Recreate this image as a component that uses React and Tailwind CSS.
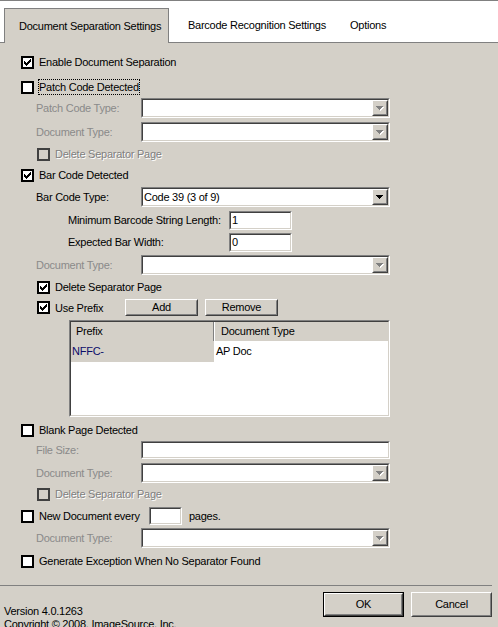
import React from "react";

const font = { fontFamily: '"Liberation Sans", Arial, sans-serif' };

function Sunken({ className = "", inner = "bg-white", children }) {
  return (
    <div className={`shrink-0 border border-t-[#808080] border-l-[#808080] border-r-white border-b-white ${className}`}>
      <div className={`h-full w-full border border-t-[#404040] border-l-[#404040] border-r-[#d4d0c8] border-b-[#d4d0c8] ${inner}`}>
        {children}
      </div>
    </div>
  );
}

function Raised({ className = "", children }) {
  return (
    <div className={`shrink-0 border border-t-white border-l-white border-r-[#404040] border-b-[#404040] bg-[#d4d0c8] ${className}`}>
      <div className="flex h-full w-full items-center justify-center border border-t-[#d4d0c8] border-l-[#d4d0c8] border-r-[#808080] border-b-[#808080]">
        {children}
      </div>
    </div>
  );
}

function Arrow({ disabled }) {
  const d = "M0 0h7v1H0z M1 1h5v1H1z M2 2h3v1H2z M3 3h1v1H3z";
  return (
    <svg width="8" height="5" viewBox="0 0 8 5" shapeRendering="crispEdges">
      {disabled && <path d={d} fill="#ffffff" transform="translate(1 1)" />}
      <path d={d} fill={disabled ? "#808080" : "#000000"} />
    </svg>
  );
}

function Combo({ value = "", disabled }) {
  return (
    <Sunken className="h-[20px] w-[249px]">
      <div className="flex h-full">
        <div className="flex-1 pl-[1px] leading-[16px] text-black">{value}</div>
        <Raised className="h-[16px] w-[16px]">
          <Arrow disabled={disabled} />
        </Raised>
      </div>
    </Sunken>
  );
}

function Field({ value = "", className }) {
  return (
    <Sunken className={className}>
      <div className="flex h-full items-center pl-[1px] text-black">{value}</div>
    </Sunken>
  );
}

function Check({ checked, disabled }) {
  return (
    <div
      className={`flex h-[13px] w-[13px] shrink-0 items-center justify-center border-2 ${
        disabled ? "border-[#404040] bg-[#d4d0c8]" : "border-black bg-white"
      }`}
    >
      {checked && (
        <svg width="9" height="9" viewBox="0 0 9 9" shapeRendering="crispEdges">
          <path
            d="M7 1h1v1H7z M6 2h2v1H6z M1 3h1v1H1z M5 3h3v1H5z M1 4h2v1H1z M4 4h3v1H4z M1 5h5v1H1z M2 6h3v1H2z M3 7h1v1H3z"
            fill={disabled ? "#808080" : "#000"}
          />
        </svg>
      )}
    </div>
  );
}

function CheckRow({ className, label, checked, disabled, focus }) {
  return (
    <div className={`flex h-[18px] items-center ${className}`}>
      <Check checked={checked} disabled={disabled} />
      <span
        className={`ml-[4px] whitespace-nowrap border leading-[14px] ${
          focus ? "border-dotted border-black" : "border-transparent"
        } ${disabled ? "text-[#808080] [text-shadow:1px_1px_0_#ffffff]" : "text-black"}`}
      >
        {label}
      </span>
    </div>
  );
}

function ComboRow({ className, label, value, disabled }) {
  return (
    <div className={`flex h-[20px] items-center ${className}`}>
      <span className={`ml-[36px] w-[105px] shrink-0 whitespace-nowrap ${disabled ? "text-[#8a8a8a]" : "text-black"}`}>
        {label}
      </span>
      <Combo value={value} disabled={disabled} />
    </div>
  );
}

function FieldRow({ className, label, value }) {
  return (
    <div className={`flex h-[19px] items-center ${className}`}>
      <span className="ml-[68px] w-[161px] shrink-0 whitespace-nowrap">{label}</span>
      <Field className="h-[19px] w-[63px]" value={value} />
    </div>
  );
}

function Button({ children, className, isDefault }) {
  if (isDefault) {
    return (
      <div className={`shrink-0 border border-black ${className}`}>
        <Raised className="h-full w-full">{children}</Raised>
      </div>
    );
  }
  return <Raised className={className}>{children}</Raised>;
}

export default function App() {
  return (
    <div
      className="h-[627px] w-[498px] overflow-hidden bg-[#d4d0c8] text-[11px] tracking-[-0.25px] text-black"
      style={font}
    >
      {/* tab strip */}
      <div className="flex h-[43px] items-end border-t border-b border-[#808080] bg-white">
        <div className="-mb-px ml-[4px] flex h-[35px] w-[165px] items-center whitespace-nowrap border-l border-t border-r border-[#808080] bg-[#d4d0c8] pl-[14px]">
          Document Separation Settings
        </div>
        <div className="flex h-[34px] items-center whitespace-nowrap">
          <span className="ml-[19px] w-[162px]">Barcode Recognition Settings</span>
          <span>Options</span>
        </div>
      </div>

      <div className="flex flex-col">
        <div className="ml-[21px]">
          <CheckRow className="mt-[10px]" label="Enable Document Separation" checked />
          <CheckRow className="mt-[7px]" label="Patch Code Detected" focus />
        </div>
        <ComboRow className="mt-[2px]" label="Patch Code Type:" disabled />
        <ComboRow className="mt-[4px]" label="Document Type:" disabled />
        <div className="ml-[37px]">
          <CheckRow className="mt-[3px]" label="Delete Separator Page" disabled />
        </div>
        <div className="ml-[21px]">
          <CheckRow className="mt-[3px]" label="Bar Code Detected" checked />
        </div>
        <ComboRow className="mt-[3px]" label="Bar Code Type:" value="Code 39 (3 of 9)" />
        <FieldRow className="mt-[4px]" label="Minimum Barcode String Length:" value="1" />
        <FieldRow className="mt-[3px]" label="Expected Bar Width:" value="0" />
        <ComboRow className="mt-[3px]" label="Document Type:" disabled />
        <div className="ml-[37px]">
          <CheckRow className="mt-[3px]" label="Delete Separator Page" checked />
        </div>
        <div className="mt-[3px] flex h-[17px] items-center">
          <div className="ml-[37px] w-[88px] shrink-0">
            <CheckRow className="" label="Use Prefix" checked />
          </div>
          <Button className="h-[17px] w-[73px]">Add</Button>
          <Button className="ml-[7px] h-[17px] w-[73px]">Remove</Button>
        </div>

        {/* prefix grid */}
        <Sunken className="ml-[69px] mt-[4px] h-[97px] w-[321px]">
          <div className="flex h-[19px] bg-[#d4d0c8]">
            <div className="flex w-[143px] items-center border-r border-[#808080] pl-[5px]">Prefix</div>
            <div className="flex flex-1 items-center border-l border-white pl-[6px]">Document Type</div>
          </div>
          <div className="flex h-[21px]">
            <div className="flex w-[143px] items-center bg-[#d4d0c8] pl-[1px] text-[#0c0c6a]">NFFC-</div>
            <div className="flex flex-1 items-center pl-[2px]">AP Doc</div>
          </div>
        </Sunken>

        <div className="ml-[21px]">
          <CheckRow className="mt-[4px]" label="Blank Page Detected" />
        </div>
        <div className="mt-[2px] flex h-[18px] items-center">
          <span className="ml-[36px] w-[105px] shrink-0 text-[#8a8a8a]">File Size:</span>
          <Field className="h-[18px] w-[249px]" />
        </div>
        <ComboRow className="mt-[4px]" label="Document Type:" disabled />
        <div className="ml-[37px]">
          <CheckRow className="mt-[2px]" label="Delete Separator Page" disabled />
        </div>
        <div className="ml-[21px] mt-[4px] flex h-[18px] items-center">
          <Check />
          <span className="ml-[4px] w-[111px] shrink-0 whitespace-nowrap border border-transparent leading-[14px]">
            New Document every
          </span>
          <Field className="h-[18px] w-[33px]" />
          <span className="ml-[7px]">pages.</span>
        </div>
        <ComboRow className="mt-[3px]" label="Document Type:" disabled />
        <div className="ml-[21px]">
          <CheckRow className="mt-[4px]" label="Generate Exception When No Separator Found" />
        </div>

        <div className="mt-[15px] h-px w-[492px] bg-[#808080]" />

        <div className="mt-[6px] flex">
          <div className="pl-[4px] pt-[13px] leading-[13px]">
            <div>Version 4.0.1263</div>
            <div className="whitespace-nowrap">Copyright © 2008, ImageSource, Inc.</div>
          </div>
          <div className="ml-auto mr-[6px] flex gap-[7px]">
            <Button className="h-[25px] w-[81px]" isDefault>
              OK
            </Button>
            <Button className="h-[25px] w-[81px]">Cancel</Button>
          </div>
        </div>
      </div>
    </div>
  );
}
